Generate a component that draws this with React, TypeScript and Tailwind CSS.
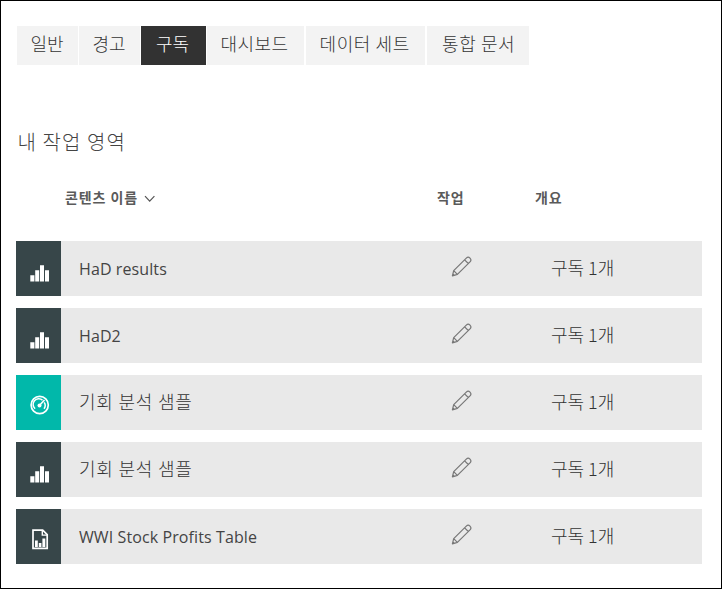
type IconKind = 'report' | 'dashboard' | 'workbook';

const tabs = [
  { label: '일반', box: 'w-[61px] pl-[13.5px]' },
  { label: '경고', box: 'w-[61px] pl-[13.5px]' },
  { label: '구독', box: 'w-[65px] pl-[15px]', active: true },
  { label: '대시보드', box: 'w-[97px] pl-[13.5px] tracking-[0.4px]' },
  { label: '데이터 세트', box: 'ml-[1px] w-[119px] pl-[13.5px] tracking-[0.6px]' },
  { label: '통합 문서', box: 'ml-[1px] w-[102px] pl-[15px] tracking-[0.6px]' },
];

const rows: { name: string; icon: IconKind; latin?: boolean }[] = [
  { name: 'HaD results', icon: 'report', latin: true },
  { name: 'HaD2', icon: 'report', latin: true },
  { name: '기회 분석 샘플', icon: 'dashboard' },
  { name: '기회 분석 샘플', icon: 'report' },
  { name: 'WWI Stock Profits Table', icon: 'workbook', latin: true },
];

function ContentIcon({ kind }: { kind: IconKind }) {
  if (kind === 'report') {
    return (
      <svg width="20" height="18" viewBox="0 0 20 18" fill="#fff" className="mt-[23px] ml-[14px]">
        <path d="M.3 11.3h4.1v6.2H.3zM5.2 6.2h4v11.3h-4zM10 1.2h4v16.3h-4zM15 6.2h4v11.3h-4z" />
      </svg>
    );
  }
  if (kind === 'dashboard') {
    return (
      <svg width="20" height="20" viewBox="0 0 20 20" fill="none" stroke="#fff" className="mt-[20px] ml-[14px]">
        <circle cx="9.7" cy="10" r="8.6" strokeWidth="1.7" />
        <path d="M5.1 13.8a5.7 5.7 0 0 1 7.4-8.7M14.2 7.3a5.7 5.7 0 0 1-.2 6.5" strokeWidth="1.5" />
        <path d="M9.6 10.2 14.5 5" strokeWidth="1.6" />
        <circle cx="9.5" cy="10.4" r="2" fill="#fff" stroke="none" />
      </svg>
    );
  }
  return (
    <svg width="18" height="21" viewBox="0 0 18 21" fill="none" stroke="#fff" className="mt-[20px] ml-[16px]">
      <path d="M1 1.2h9.7l4.5 4.5v13.6H1z" strokeWidth="1.7" />
      <path d="M10.3 1.2v4.9h5" strokeWidth="1.4" />
      <path d="M3 11.5h2.8V18H3zM6.8 14h2.6v4H6.8zM10.4 9.5h2.9V18h-2.9z" fill="#fff" stroke="none" />
    </svg>
  );
}

function Pencil() {
  return (
    <svg width="22" height="22" viewBox="0 0 22 22" fill="none" stroke="#777" strokeWidth="1.2" strokeLinejoin="round">
      <path d="M1.4 19.8 2.7 14.7 15.3 2.1a2.5 2.5 0 0 1 3.7 3.7L6.4 18.4ZM2.7 14.7 6.4 18.4M13.6 3.8l3.7 3.7M1.9 17.9l1.4 1.4" />
    </svg>
  );
}

export default function App() {
  return (
    <div className="h-[589px] w-[722px] overflow-hidden border border-black bg-white pl-[15px] font-['Noto_Sans_CJK_KR',sans-serif] text-[#444]">
      <nav className="mt-[25px] ml-[1px] flex h-[39px] gap-x-[1px]">
        {tabs.map((tab) => (
          <button
            key={tab.label}
            className={`h-[38.5px] shrink-0 pb-[3px] text-left text-[18px] leading-[35px] font-light whitespace-nowrap ${tab.box} ${
              tab.active ? 'bg-[#323232] text-white' : 'bg-[#f3f3f3] text-[#333]'
            }`}
          >
            {tab.label}
          </button>
        ))}
      </nav>
      <h1 className="mt-[62px] ml-[1.5px] h-[30px] text-[20px] leading-[30px] font-light tracking-[1.1px]">내 작업 영역</h1>
      <div className="mt-[30px] flex h-[20px] text-[14px] leading-[20px] font-bold tracking-[0.9px] text-[#5a5a5a]">
        <div className="ml-[49px] flex w-[372px] items-center">
          콘텐츠 이름
          <svg width="12" height="8" viewBox="0 0 12 8" fill="none" stroke="#555" strokeWidth="1.2" className="mt-[3px] ml-[6px]">
            <path d="m1 1.2 4.7 5 4.7-5" />
          </svg>
        </div>
        <div className="w-[98px]">작업</div>
        <div>개요</div>
      </div>
      <div className="mt-[34px] flex flex-col gap-3">
        {rows.map((row, i) => (
          <div key={i} className="flex h-[55px] w-[686px] bg-[#e9e9e9]">
            <div className={`w-[45px] ${row.icon === 'dashboard' ? 'bg-[#01b8aa]' : 'bg-[#374649]'}`}>
              <ContentIcon kind={row.icon} />
            </div>
            <div
              className={`w-[390px] pl-[18px] whitespace-nowrap ${
                row.latin
                  ? "font-['Open_Sans',sans-serif] text-[16px] leading-[56px] tracking-[0.1px]"
                  : 'text-[18px] leading-[53px] font-light tracking-[0.8px] text-[#333]'
              }`}
            >
              {row.name}
            </div>
            <div className="w-[100px] pt-[15px]">
              <Pencil />
            </div>
            <div className="text-[18px] leading-[53px] font-light whitespace-nowrap text-[#333]">구독 1개</div>
          </div>
        ))}
      </div>
    </div>
  );
}
